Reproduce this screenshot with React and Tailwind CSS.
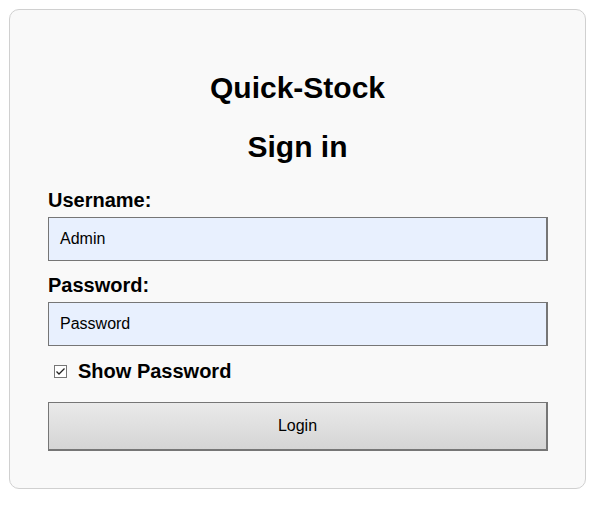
export default function App() {
  return (
    <div className="min-h-[509px] bg-white p-[9px] font-['Liberation_Sans',Arial,sans-serif] text-black">
      <div className="w-[577px] h-[480px] rounded-[10px] border border-[#d0d0d0] bg-[#f9f9f9] px-[38px] pt-[61px]">
        <h1 className="text-center text-[30px] font-bold leading-[34.5px]">Quick-Stock</h1>
        <h2 className="mt-[24.5px] text-center text-[30px] font-bold leading-[34.5px]">Sign in</h2>
        <label className="mt-[24.5px] block text-[20px] font-bold leading-[23px]">Username:</label>
        <div className="mt-[5px] flex h-[44px] w-[500px] items-center border border-r-2 border-[#767676] bg-[#e8f0fe] pl-[11px] text-[16px]">
          Admin
        </div>
        <label className="mt-[13px] block text-[20px] font-bold leading-[23px]">Password:</label>
        <div className="mt-[5px] flex h-[44px] w-[500px] items-center border border-r-2 border-[#767676] bg-[#e8f0fe] pl-[11px] text-[16px]">
          Password
        </div>
        <div className="mt-[14px] flex h-[23px] items-center">
          <span className="ml-[6px] flex h-[13px] w-[13px] items-center justify-center border border-[#767676] bg-white">
            <svg width="11" height="11" viewBox="0 0 11 11">
              <path d="M1.5 5.5 L4 8 L9.5 2.5" fill="none" stroke="#222" strokeWidth="1.3" />
            </svg>
          </span>
          <span className="ml-[11px] text-[20px] font-bold leading-[23px]">Show Password</span>
        </div>
        <div className="mt-[19px] flex h-[49px] w-[500px] items-center justify-center border border-r-2 border-b-2 border-[#767676] bg-gradient-to-b from-[#eaeaea] to-[#d5d5d5] text-[16px]">
          Login
        </div>
      </div>
    </div>
  );
}
